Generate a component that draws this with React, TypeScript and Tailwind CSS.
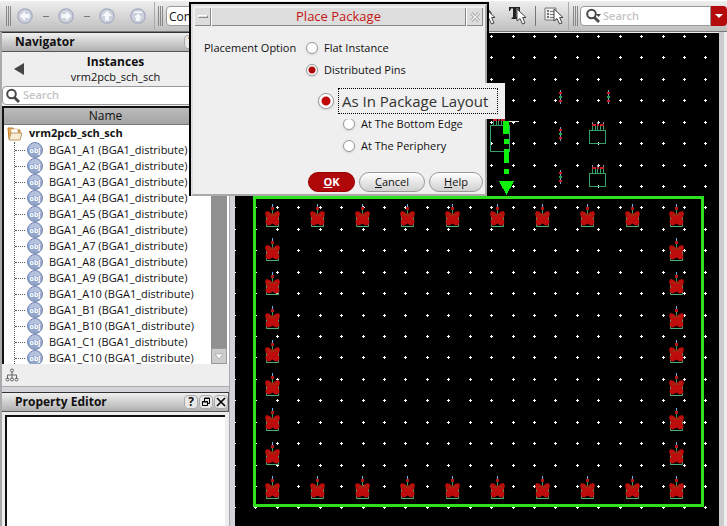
import type { ReactNode } from "react";

const font = "font-['Open_Sans','Noto_Sans',sans-serif]";

const items = ["A1", "A2", "A3", "A4", "A5", "A6", "A7", "A8", "A9", "A10", "B1", "B10", "C1", "C10"];

function Grip() {
  return (
    <span className="flex h-5 shrink-0 gap-px">
      <i className="w-px bg-[#888]" />
      <i className="w-px bg-[#888]" />
      <i className="w-px bg-[#888]" />
    </span>
  );
}

function NavArrow({ label, children }: { label: string; children: ReactNode }) {
  return (
    <button aria-label={label} className="size-4 shrink-0">
      <svg viewBox="0 0 16 16" className="size-4">
        <circle cx="8" cy="8" r="7.2" fill="#cdd1dc" stroke="#a4abc0" strokeWidth="1.2" />
        {children}
      </svg>
    </button>
  );
}

const arrow = "M8 2.8L13 8H10V12.5H6V8H3Z";

function Magnifier({ menu = false }: { menu?: boolean }) {
  return (
    <svg viewBox="0 0 16 16" className="size-4 shrink-0" fill="none" stroke="#484848">
      <circle cx="6.5" cy="6" r="4.3" strokeWidth="2" />
      <path d="M9.5 9.5L14 14" strokeWidth="2.8" />
      {menu && <path d="M11 6H16L13.5 9Z" fill="#484848" stroke="none" />}
    </svg>
  );
}

function Pointer({ x, y }: { x: number; y: number }) {
  return (
    <path
      transform={`translate(${x} ${y})`}
      d="M0 0V12L3 9.5L5.5 15L8 14L5.6 8.5H9Z"
      fill="#fff"
      stroke="#444"
      strokeWidth="1"
    />
  );
}

function Toolbar() {
  return (
    <header className="flex h-[31px] shrink-0 items-center border-b border-[#777] bg-linear-to-b from-[#eee] to-[#c0c0c0] pl-1.5">
      <Grip />
      <div className="ml-1.5 flex items-center">
        <NavArrow label="Back">
          <path d={arrow} fill="#f6f7fa" transform="rotate(-90 8 8)" />
        </NavArrow>
        <span className="mr-[9px] ml-2.5 h-px w-1.5 bg-[#777]" />
        <NavArrow label="Forward">
          <path d={arrow} fill="#f6f7fa" transform="rotate(90 8 8)" />
        </NavArrow>
        <span className="mr-[9px] ml-2.5 h-px w-1.5 bg-[#777]" />
        <NavArrow label="Up">
          <path d={arrow} fill="#f6f7fa" />
        </NavArrow>
        <span className="w-[15px]" />
        <NavArrow label="Top">
          <path d="M4 3.5H12V5H4ZM8 5.5L12 9.5H10V13H6V9.5H4Z" fill="#f6f7fa" />
        </NavArrow>
      </div>
      <span className="mr-[3px] ml-2 h-7 w-px bg-[#aaa]" />
      <Grip />
      <input
        aria-label="View"
        defaultValue="Con"
        className="ml-[3px] h-5 w-24 rounded border border-[#999] bg-white px-0.5 text-xs"
      />
      <div className="ml-auto flex items-center">
        <button aria-label="Select">
          <svg viewBox="0 0 20 24" className="h-6 w-5">
            <circle cx="6" cy="11" r="5" fill="none" stroke="#555" strokeWidth="2" />
            <Pointer x={6} y={5} />
          </svg>
        </button>
        <button aria-label="Select text" className="ml-2">
          <svg viewBox="0 0 20 24" className="h-6 w-5">
            <path d="M1 3H12V7H11L10 4.500H8.500V13L10 14V15H3.500V14L5 13V4.500H3L2 7H1Z" fill="#222" />
            <Pointer x={9} y={5} />
          </svg>
        </button>
        <span className="mr-2 ml-[7px] h-5 w-px bg-[#777]" />
        <button aria-label="Select by properties">
          <svg viewBox="0 0 20 24" className="h-6 w-5">
            <path d="M1 4H12V16H1Z" fill="#eee" stroke="#777" />
            <path d="M3 6H5V8H3ZM3 9H5V11H3ZM3 12H5V14H3Z" fill="#777" />
            <path d="M6 7.500H10M6 10.500H10M6 13.500H10" stroke="#777" />
            <Pointer x={10} y={5} />
          </svg>
        </button>
        <span className="mr-1 ml-1 h-7 w-px bg-[#aaa]" />
        <Grip />
        <label className="ml-0.5 flex h-5 w-[131px] items-center rounded-l border border-[#999] bg-white pl-1">
          <Magnifier menu />
          <input
            aria-label="Search toolbar"
            placeholder="Search"
            className="ml-0.5 w-full text-[11px] placeholder:font-semibold placeholder:text-[#c4c4c4] focus:outline-none"
          />
        </label>
        <button aria-label="Search options" className="flex h-5 w-4 items-center justify-center rounded-r bg-[#b40c0c]">
          <svg viewBox="0 0 8 4" className="h-1 w-2">
            <path d="M0 0H8L4 4Z" fill="#fff" />
          </svg>
        </button>
      </div>
    </header>
  );
}

function PanelTitle({ title }: { title: string }) {
  return (
    <div className="flex h-5 shrink-0 items-center border-y border-r border-t-[#333] border-r-[#555] border-b-[#555] bg-linear-to-b from-[#f0f0f0] to-[#b0b0b0] pl-[13px]">
      <h2 className="flex-1 text-xs font-bold">{title}</h2>
      <div className="flex gap-px">
        <button aria-label={`${title} help`} className="size-3.5 rounded border border-[#aaa] bg-[#e8e8e8] text-xs leading-3 font-bold">
          ?
        </button>
        <button aria-label={`Float ${title}`} className="size-3.5 rounded border border-[#aaa] bg-[#e8e8e8]">
          <svg viewBox="0 0 12 12" className="size-3" fill="none" stroke="#000">
            <path d="M4.500 5V2H9.500V7.500H8M4 2.500H10" />
            <path d="M2.500 5.500H7.500V9.500H2.500ZM2 6H8" />
          </svg>
        </button>
        <button aria-label={`Close ${title}`} className="size-3.5 rounded border border-[#aaa] bg-[#e8e8e8]">
          <svg viewBox="0 0 12 12" className="size-3" stroke="#000" strokeWidth="1.6">
            <path d="M2 2L10 10M10 2L2 10" />
          </svg>
        </button>
      </div>
    </div>
  );
}

function Tree() {
  return (
    <div className="flex h-[258px] shrink-0 overflow-hidden border-t-2 border-l-2 border-[#111] bg-white pr-0.5">
      <div className="min-w-0 flex-1">
        <div className="h-[17px] border-b border-[#777] bg-linear-to-b from-[#bcbcbc] to-[#a4a4a4] pr-1 text-center text-xs leading-4">
          Name
        </div>
        <div className="flex h-[17px] items-center gap-1.5 pl-[3px] text-[11px] font-bold">
          <svg viewBox="0 0 16 16" className="size-4">
            <path d="M1 2H6L8 4H13V13H2Z" fill="#e9a94e" stroke="#b97c2c" />
            <path d="M4 3H11V8H4Z" fill="#fff" stroke="#c9a36a" strokeWidth=".6" />
            <path d="M4 7H15L13 14H2Z" fill="#f8ecd2" stroke="#b99b68" />
          </svg>
          vrm2pcb_sch_sch
        </div>
        <ul className="ml-2.5 border-l border-dotted border-[#555]">
          {items.map((n) => (
            <li key={n} className="flex h-4 items-center text-[11px] whitespace-nowrap">
              <span className="w-2.5 border-t border-dotted border-[#555]" />
              <svg viewBox="0 0 16 16" className="mr-1.5 ml-0.5 size-4 shrink-0">
                <circle cx="8" cy="8" r="7.500" fill="#93a6cc" stroke="#7286b0" />
                <path d="M2 7A6 6 0 0 1 14 7Q8 4 2 7Z" fill="#b4c2de" />
                <text x="8" y="10.500" textAnchor="middle" fontSize="7" fontWeight="700" fill="#fff">
                  obj
                </text>
              </svg>
              BGA1_{n} (BGA1_distribute)
            </li>
          ))}
        </ul>
      </div>
      <div className="flex w-4 flex-col bg-[#909090]">
        <button aria-label="Scroll down" className="mt-auto flex h-4 items-center justify-center border border-[#999] bg-[#ccc]">
          <svg viewBox="0 0 8 7" className="h-[7px] w-2">
            <path d="M0 1H8L4 6Z" fill="#fff" stroke="#888" strokeWidth=".5" />
          </svg>
        </button>
      </div>
    </div>
  );
}

function Sidebar() {
  return (
    <aside className="flex w-[235px] shrink-0 border-r-[5px] border-[#d2d2d8] bg-[#aaa] pl-0.5">
      <div className="flex w-[227px] flex-col bg-[#eee]">
        <PanelTitle title="Navigator" />
        <div className="grid h-[34px] grid-cols-[36px_1fr_36px] items-center">
          <button aria-label="Previous view" className="ml-3">
            <svg viewBox="0 0 10 12" className="h-3 w-2.5">
              <path d="M10 0V12L0 6Z" fill="#444" />
            </svg>
          </button>
          <div className="text-center">
            <div className="text-xs leading-[15px] font-bold">Instances</div>
            <div className="text-[11px] leading-[15px]">vrm2pcb_sch_sch</div>
          </div>
        </div>
        <label className="flex h-[19px] items-center rounded border border-[#999] bg-white pl-0.5">
          <Magnifier />
          <input
            aria-label="Search navigator"
            placeholder="Search"
            className="ml-0.5 w-full text-[11px] placeholder:font-semibold placeholder:text-[#c4c4c4] focus:outline-none"
          />
        </label>
        <div className="h-px" />
        <Tree />
        <div className="flex h-[23px] items-center border-b border-[#aaa] pl-[3px]">
          <button aria-label="Hierarchy">
            <svg viewBox="0 0 14 14" className="size-3.5" fill="none" stroke="#666">
              <circle cx="7" cy="2.500" r="1.500" />
              <path d="M7 4V11M2.500 11V7H11.500V11" />
              <circle cx="2.500" cy="11.500" r="1.500" />
              <circle cx="7" cy="11.500" r="1.500" />
              <circle cx="11.500" cy="11.500" r="1.500" />
            </svg>
          </button>
        </div>
        <div className="h-[5px] bg-[#d4d4d8]" />
        <PanelTitle title="Property Editor" />
        <div className="mr-1 ml-[3px] mt-[3px] flex-1 border-t-2 border-l-2 border-[#111] bg-white" />
      </div>
    </aside>
  );
}

const gridX = Array.from({ length: 23 }, (_, i) => Math.round(-1 + i * 21.43));
const gridY = Array.from({ length: 23 }, (_, i) => Math.round(3 + i * 21.43));
const pinX = [37, 82, 127, 172, 217, 262, 307, 352, 397, 441];
const pinY = [193, 227, 261, 295, 329, 362, 397, 431, 465];
const pins = [
  ...pinX.map((x) => [x, pinY[0]]),
  ...pinX.map((x) => [x, pinY[8]]),
  ...pinY.slice(1, 8).flatMap((y) => [[pinX[0], y], [pinX[9], y]]),
];

function Pin({ x, y }: { x: number; y: number }) {
  return (
    <g transform={`translate(${x} ${y})`} shapeRendering="auto">
      <path d="M.5 -22V-17" stroke="#6ab0e8" />
      <path d="M.5 -16V-11" stroke="#2f9e5a" />
      <path d="M-1 -19H2V-16H-1Z" fill="#b41414" />
      <path d="M-5.500 -11.500H6.500V.500H-5.500Z" fill="none" stroke="#4cb07a" />
      <path
        d="M-5.500 -15L-2 -14L-1 -12.500H2L3 -14L6.500 -15L8 -12.500L7 -9L6 -7.500L7.500 -4L6.500 -1L3.500 -.5L.5 -2.500L-2.500 -.5L-5.500 -1L-6.500 -4L-5 -7.500L-6 -9L-7 -12.500Z"
        fill="#be0c0c"
      />
      <path d="M-4.500 -11H5.500" stroke="#8a3a14" />
    </g>
  );
}

function Resistor({ x, y }: { x: number; y: number }) {
  return (
    <g transform={`translate(${x} ${y})`}>
      <path d="M.5 -1V13" stroke="#6ca0c8" />
      <path d="M-1 1H2V3H-1ZM-1 9H2V11H-1Z" fill="#d01820" />
      <path d="M-1 5H2V7H-1Z" fill="#28a058" />
    </g>
  );
}

function Chip({ x, y, w, h }: { x: number; y: number; w: number; h: number }) {
  return (
    <g transform={`translate(${x} ${y})`} fill="none">
      <path d={`M.5 .5H${w}V${h}H.5Z`} stroke="#38a068" />
      <path d="M3.500 0V-5M6.500 0V-5M8.500 0V-5M11.500 0V-5M14.500 0V-5" stroke="#38a068" />
      <path d="M3 -5H7M8 -5H10M11 -5H15" stroke="#c82028" strokeWidth="2" />
      <path d="M3.500 -6V-8M8.500 -6V-8M14.500 -6V-8" stroke="#8098b8" />
    </g>
  );
}

function Canvas() {
  return (
    <main className="min-w-0 flex-1 overflow-hidden border-t border-[#eee] bg-black">
      <svg width="484" height="493" viewBox="0 0 484 493" shapeRendering="crispEdges" role="img" aria-label="Schematic canvas">
        <path
          d={gridX.flatMap((x) => gridY.map((y) => `M${x - 1} ${y}h3v1h-3zM${x} ${y - 1}h1v3h-1z`)).join("")}
          fill="#fff"
        />
        <Resistor x={325} y={58} />
        <Resistor x={373} y={58} />
        <Resistor x={325} y={95} />
        <Resistor x={325} y={138} />
        <Chip x={354} y={97} w={16.5} h={13.5} />
        <Chip x={354} y={140} w={16.5} h={13.5} />
        <Chip x={255} y={92} w={19.5} h={26.5} />
        <path d="M19.500 164.500H467.500V472.500H19.500Z" fill="none" stroke="#2ee01e" strokeWidth="3" />
        {pins.map(([x, y]) => (
          <Pin key={`${x}-${y}`} x={x} y={y} />
        ))}
        <path d="M268 88H284V89H268Z" fill="#ddd" />
        <path d="M268 88H274V101H268ZM269 106H274V111H269ZM269 116H274V130H269ZM269 136H274V141H269Z" fill="#0bf20b" />
        <path d="M264 148H279L271.500 162Z" fill="#0bf20b" />
      </svg>
    </main>
  );
}

const radio =
  "size-3 shrink-0 appearance-none rounded-full border border-[#999] bg-white shadow-sm checked:bg-[radial-gradient(circle,#b00808_0_3px,#fff_4px)]";
const pill =
  "h-5 rounded-full border border-[#999] bg-linear-to-b from-white to-[#d0d0d0] text-[11px] leading-4";

function PlaceDialog() {
  return (
    <section
      role="dialog"
      aria-labelledby="dialog-title"
      className="absolute top-0.5 left-[189px] h-[194px] w-[300px] border-2 border-b-0 border-black bg-[#efefef] text-[11px]"
    >
      <div className="flex h-full flex-col border-2 border-[#aaa] border-t-[#ddd] border-l-[#ddd] p-0.5">
        <div className="flex h-[18px] shrink-0 gap-px bg-white">
          <button aria-label="Window menu" className="flex w-4 items-center justify-center border-r border-b border-[#888] bg-[#ddd]">
            <span className="h-[3px] w-2.5 border border-white border-r-[#888] border-b-[#888]" />
          </button>
          <h1 id="dialog-title" className="flex-1 border-r border-b border-[#888] bg-[#ddd] text-center text-[13px] leading-4 text-[#c41414]">
            Place Package
          </h1>
          <button aria-label="Close dialog" className="flex w-4 items-center justify-center border-r border-b border-[#888] bg-[#ddd]">
            <svg viewBox="0 0 10 10" className="size-2.5" stroke="#999" strokeWidth="3">
              <path d="M1 1L9 9M9 1L1 9" />
              <path d="M1 1L9 9M9 1L1 9" stroke="#eee" strokeWidth="1.500" />
            </svg>
          </button>
        </div>
        <div role="radiogroup" aria-labelledby="placement-option" className="relative flex flex-col pt-[11px]">
          <div className="flex h-[22px] items-center pl-[9px]">
            <span id="placement-option" className="w-[102px]">
              Placement Option
            </span>
            <label className="flex items-center gap-1.5">
              <input type="radio" name="mode" className={radio} />
              Flat Instance
            </label>
          </div>
          <label className="flex h-[22px] items-center gap-1.5 pl-[111px]">
            <input type="radio" name="mode" defaultChecked className={radio} />
            Distributed Pins
          </label>
          <label className="mt-8 flex h-[22px] items-center gap-1.5 pl-[148px]">
            <input type="radio" name="style" className={radio} />
            At The Bottom Edge
          </label>
          <label className="flex h-[22px] items-center gap-1.5 pl-[148px]">
            <input type="radio" name="style" className={radio} />
            At The Periphery
          </label>
          <label className="absolute top-[57px] left-[119px] flex h-9 w-[191px] items-center gap-1 bg-[#efefef] pl-1 text-[15px]">
            <input
              type="radio"
              name="style"
              defaultChecked
              className="size-4 shrink-0 appearance-none rounded-full border border-[#999] bg-white shadow-sm checked:bg-[radial-gradient(circle,#c00808_0_4px,#fff_5px)]"
            />
            <span className="w-40 border border-dotted border-black pl-[3px] leading-6 whitespace-nowrap text-[#333]">
              As In Package Layout
            </span>
          </label>
        </div>
        <div className="mt-auto flex justify-end gap-1">
          <button className="h-5 w-[47px] rounded-full border border-[#900] bg-[#b00808] text-[11px] leading-4 font-bold text-white">
            <u>O</u>K
          </button>
          <button className={`${pill} w-[66px]`}>
            <u>C</u>ancel
          </button>
          <button className={`${pill} w-[54px]`}>
            <u>H</u>elp
          </button>
        </div>
      </div>
    </section>
  );
}

export default function App() {
  return (
    <div className={`relative flex h-screen flex-col overflow-hidden bg-[#e8e8e8] text-[#111] ${font}`}>
      <div className="h-px shrink-0 bg-white" />
      <Toolbar />
      <div className="flex min-h-0 flex-1">
        <Sidebar />
        <Canvas />
        <div className="w-2 shrink-0 border-l-[5px] border-[#ccc] bg-[#eee]" />
      </div>
      <PlaceDialog />
    </div>
  );
}
